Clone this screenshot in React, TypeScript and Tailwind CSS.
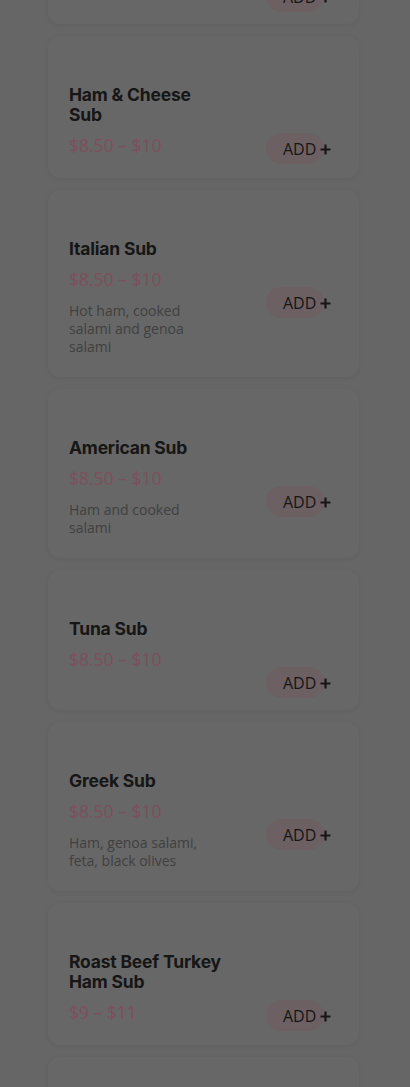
import React from "react";

type Item = {
  name: string;
  price: string;
  desc?: string;
};

const items: Item[] = [
  { name: "Turkey Sub", price: "$8.50 – $10" },
  { name: "Ham & Cheese Sub", price: "$8.50 – $10" },
  { name: "Italian Sub", price: "$8.50 – $10", desc: "Hot ham, cooked salami and genoa salami" },
  { name: "American Sub", price: "$8.50 – $10", desc: "Ham and cooked salami" },
  { name: "Tuna Sub", price: "$8.50 – $10" },
  { name: "Greek Sub", price: "$8.50 – $10", desc: "Ham, genoa salami, feta, black olives" },
  { name: "Roast Beef Turkey Ham Sub", price: "$9 – $11" },
  { name: "Chicken Sub", price: "$8.50 – $10" },
];

const AddButton = () => (
  <div className="relative h-[31px] w-[58px] rounded-full bg-[#6c6063]">
    <div className="absolute left-[17px] top-0 flex h-full items-center gap-[4px] whitespace-nowrap">
      <span className="text-[16px] text-[#161616]">ADD</span>
      <svg width="11" height="11" viewBox="0 0 11 11" className="mt-[1px]">
        <path d="M5.5 0.5v10M0.5 5.5h10" stroke="#161616" strokeWidth="2.2" />
      </svg>
    </div>
  </div>
);

const MenuCard = ({ item }: { item: Item }) => (
  <div className="flex justify-between rounded-[12px] bg-[#676767] pl-[21px] pr-[35px] shadow-[0_1px_5px_rgba(0,0,0,0.06)]">
    <div className="w-[155px] pt-[49px] pb-[21px]">
      <h3 className="text-[17.5px] font-bold leading-[20px] tracking-[-0.2px] text-[#161616] [font-family:Inter,'Liberation_Sans',sans-serif]">
        {item.name}
      </h3>
      <div className="mt-[8px] text-[17.5px] leading-[24px] text-[#7e4e5c]">{item.price}</div>
      {item.desc && (
        <p className="mt-[11px] w-[150px] text-[14px] leading-[18px] text-[#404040]">{item.desc}</p>
      )}
    </div>
    <div className="pt-[97px] pb-[12px]">
      <AddButton />
    </div>
  </div>
);

export default function App() {
  return (
    <div className="h-[1087px] overflow-hidden bg-[#666666] [font-family:'Open_Sans',sans-serif]">
      <div className="mt-[-116px] ml-[48px] flex w-[311px] flex-col gap-[12px]">
        {items.map((item) => (
          <MenuCard key={item.name} item={item} />
        ))}
      </div>
    </div>
  );
}
